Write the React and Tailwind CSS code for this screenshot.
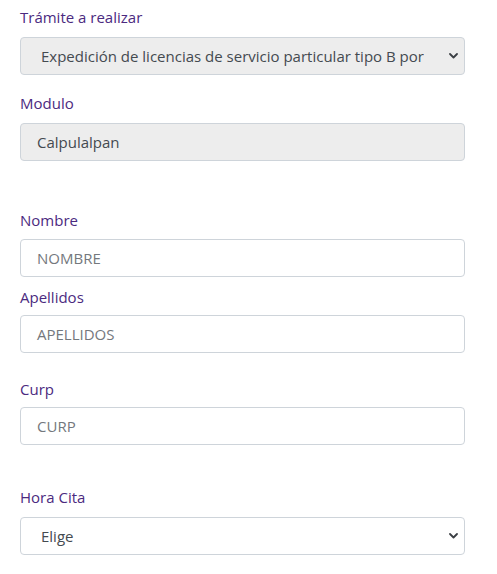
import React from "react";

function Chevron() {
  return (
    <svg width="9" height="6" viewBox="0 0 9 6" className="shrink-0">
      <path d="M1 1 L4.5 4.5 L8 1" fill="none" stroke="#3b3f44" strokeWidth="1.8" strokeLinecap="round" strokeLinejoin="round" />
    </svg>
  );
}

function Label({ children, className = "" }) {
  return <div className={`h-[22px] leading-[22px] text-[15px] text-[#4b2a80] ${className}`}>{children}</div>;
}

function Box({ children, gray, select, className = "" }) {
  return (
    <div
      className={`h-[38px] w-[445px] rounded-[4px] border border-[#ced4da] flex items-center justify-between ${
        gray ? "bg-[#ededed]" : "bg-white"
      } ${className}`}
    >
      {children}
      {select && (
        <span className="pr-[6px]">
          <Chevron />
        </span>
      )}
    </div>
  );
}

export default function App() {
  return (
    <div className="w-[497px] h-[574px] bg-white pl-[20px] pt-[6px]" style={{ fontFamily: '"Open Sans", "Noto Sans", sans-serif' }}>
      <Label>Trámite a realizar</Label>
      <Box gray select className="mt-[9px]">
        <span className="pl-[20px] text-[15px] text-[#444a50] whitespace-nowrap overflow-hidden">
          Expedición de licencias de servicio particular tipo B por
        </span>
      </Box>

      <Label className="mt-[17px]">Modulo</Label>
      <Box gray className="mt-[9px]">
        <span className="pl-[16px] text-[15px] text-[#444a50]">Calpulalpan</span>
      </Box>

      <Label className="mt-[48px]">Nombre</Label>
      <Box className="mt-[8px]">
        <span className="pl-[16px] text-[15px] text-[#74787d]">NOMBRE</span>
      </Box>

      <Label className="mt-[9px]">Apellidos</Label>
      <Box className="mt-[7px]">
        <span className="pl-[16px] text-[15px] text-[#74787d]">APELLIDOS</span>
      </Box>

      <Label className="mt-[25px]">Curp</Label>
      <Box className="mt-[7px]">
        <span className="pl-[16px] text-[15px] text-[#74787d]">CURP</span>
      </Box>

      <Label className="mt-[41px]">Hora Cita</Label>
      <Box select className="mt-[9px]">
        <span className="pl-[20px] text-[15px] text-[#444a50]">Elige</span>
      </Box>
    </div>
  );
}
